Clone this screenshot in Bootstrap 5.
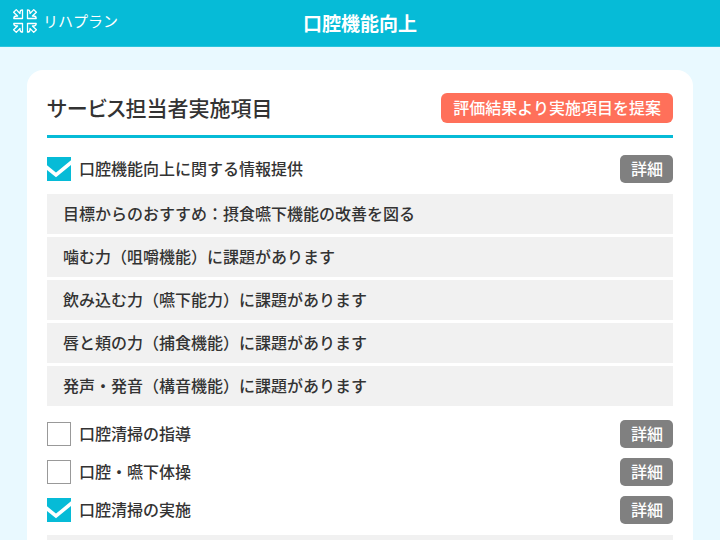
<!DOCTYPE html>
<html lang="ja">
<head>
<meta charset="utf-8">
<meta name="viewport" content="width=device-width, initial-scale=1">
<title>口腔機能向上</title>
<link href="https://cdn.jsdelivr.net/npm/bootstrap@5.3.0/dist/css/bootstrap.min.css" rel="stylesheet">
<style>
body { background: #e9f9ff; color: #333; font: 500 16px/24px "Noto Sans CJK JP", sans-serif; }
.app-bar { background: #06bbd7; color: #fff; height: 47px; padding: 0 12px; border-bottom: 1px solid #2cc5dd; }
.brand-link { font-size: 15px; font-weight: 400; gap: 5px; }
.app-title { font-size: 19px; font-weight: 700; }
.sheet { border-radius: 16px; margin: 23px 27px 0; padding: 23px 20px 20px; }
.sheet-head { border-bottom: 3px solid #06bbd7; padding-bottom: 12px; margin-bottom: 17px; }
.sheet-title { font-size: 21px; line-height: 28px; font-weight: 500; font-feature-settings: "palt"; }
.btn { --bs-btn-font-weight: 500; --bs-btn-font-size: 16px; --bs-btn-border-width: 0; --bs-btn-color: #fff; --bs-btn-hover-color: #fff; --bs-btn-line-height: 26px; --bs-btn-padding-y: 0; --bs-btn-border-radius: 5px; padding-bottom: 2px; }
.btn-suggest { --bs-btn-bg: #ff705a; --bs-btn-hover-bg: #f0604a; --bs-btn-line-height: 28px; --bs-btn-padding-x: 12px; --bs-btn-border-radius: 6px; }
.btn-detail { --bs-btn-bg: #808080; --bs-btn-hover-bg: #6c6c6c; --bs-btn-padding-x: 11px; padding-right: 10px; }
.task-list { gap: 10px; }
.task-list label { padding-bottom: 2px; }
.form-check-input.task-box { width: 24px; height: 24px; margin: 0; border: 1px solid #999; border-radius: 0; }
.form-check-input.task-box:checked { background: #06bbd7 url("data:image/svg+xml,%3Csvg xmlns='http://www.w3.org/2000/svg' viewBox='0 0 24 24'%3E%3Cpath d='M-2 9 9 18 26 4' fill='none' stroke='white' stroke-width='3.6'/%3E%3C/svg%3E") center/24px no-repeat; border: 0; }
.reasons { gap: 3px; margin: 1px 0 4px; }
.reasons li { background: #f1f1f1; padding: 7px 16px 9px; }
</style>
<script src="https://cdn.jsdelivr.net/npm/bootstrap@5.3.0/dist/js/bootstrap.bundle.min.js"></script>
</head>
<body>
<header class="app-bar d-flex align-items-center">
  <div class="col">
    <a href="#" class="brand-link d-inline-flex align-items-center text-white text-decoration-none">
      <svg width="26" height="26" viewBox="0 0 26 26" fill="none" stroke="#fff" stroke-width="1.3" stroke-linejoin="round" aria-hidden="true">
        <g id="arrow"><path d="M1.800 10.500H10.500V1.800Q8 1.800 8 4.500V5.600L4.300 1.600 1.600 4.300 5.600 8H4.500Q1.800 8 1.800 10.500Z"/></g>
        <use href="#arrow" transform="matrix(-1 0 0 1 26 0)"/>
        <use href="#arrow" transform="matrix(1 0 0 -1 0 26)"/>
        <use href="#arrow" transform="matrix(-1 0 0 -1 26 26)"/>
      </svg>
      <span>リハプラン</span>
    </a>
  </div>
  <h1 class="app-title m-0">口腔機能向上</h1>
  <div class="col"></div>
</header>
<main class="sheet bg-white">
  <div class="sheet-head d-flex justify-content-between align-items-start">
    <h2 class="sheet-title m-0">サービス担当者実施項目</h2>
    <button type="button" class="btn btn-suggest">評価結果より実施項目を提案</button>
  </div>
  <div class="task-list d-flex flex-column">
    <div class="d-flex justify-content-between align-items-center">
      <div class="d-flex align-items-center gap-2">
        <input class="form-check-input task-box" type="checkbox" id="task1" checked>
        <label for="task1">口腔機能向上に関する情報提供</label>
      </div>
      <button type="button" class="btn btn-detail">詳細</button>
    </div>
    <ul class="reasons list-unstyled d-flex flex-column">
      <li>目標からのおすすめ：摂食嚥下機能の改善を図る</li>
      <li>噛む力（咀嚼機能）に課題があります</li>
      <li>飲み込む力（嚥下能力）に課題があります</li>
      <li>唇と頬の力（捕食機能）に課題があります</li>
      <li>発声・発音（構音機能）に課題があります</li>
    </ul>
    <div class="d-flex justify-content-between align-items-center">
      <div class="d-flex align-items-center gap-2">
        <input class="form-check-input task-box" type="checkbox" id="task2">
        <label for="task2">口腔清掃の指導</label>
      </div>
      <button type="button" class="btn btn-detail">詳細</button>
    </div>
    <div class="d-flex justify-content-between align-items-center">
      <div class="d-flex align-items-center gap-2">
        <input class="form-check-input task-box" type="checkbox" id="task3">
        <label for="task3">口腔・嚥下体操</label>
      </div>
      <button type="button" class="btn btn-detail">詳細</button>
    </div>
    <div class="d-flex justify-content-between align-items-center">
      <div class="d-flex align-items-center gap-2">
        <input class="form-check-input task-box" type="checkbox" id="task4" checked>
        <label for="task4">口腔清掃の実施</label>
      </div>
      <button type="button" class="btn btn-detail">詳細</button>
    </div>
    <ul class="reasons list-unstyled d-flex flex-column">
      <li>&nbsp;</li>
    </ul>
  </div>
</main>
</body>
</html>
